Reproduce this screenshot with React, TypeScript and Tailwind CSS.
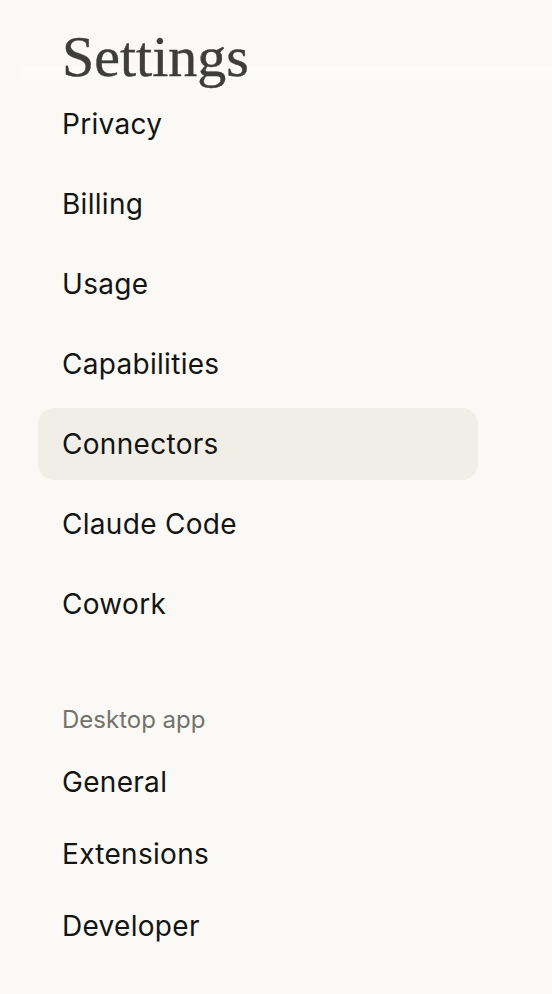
import React from "react";

const main = ["Privacy", "Billing", "Usage", "Capabilities", "Connectors", "Claude Code", "Cowork"];
const desktop = ["General", "Extensions", "Developer"];

export default function App() {
  return (
    <div className="min-h-[994px] w-full bg-[#faf9f5] text-[#141413]" style={{ fontFamily: "Inter, 'Noto Sans', sans-serif" }}>
      <div className="relative">
        <div className="pointer-events-none absolute left-[22px] right-0 top-[66px] h-[46px] bg-gradient-to-b from-[#ffffff]/35 to-[#ffffff]/0" />
        <div className="relative z-10 flex h-[88px] items-start px-[62px] pt-[25px]">
          <h1
            className="text-[58px] font-normal leading-[64px] text-[#3d3d3a]"
            style={{ fontFamily: "'Liberation Serif', 'DejaVu Serif', serif", WebkitTextStroke: "0.4px #3d3d3a" }}
          >
            Settings
          </h1>
        </div>
      </div>
      <nav className="flex flex-col gap-[8px] px-[38px]">
        {main.map((m) => (
          <div
            key={m}
            className={`flex h-[72px] w-[440px] items-center rounded-[16px] px-[24px] text-[28px] tracking-[0.3px] ${
              m === "Connectors" ? "bg-[#f0eee6]" : ""
            }`}
          >
            {m}
          </div>
        ))}
      </nav>
      <div className="mt-[64px] px-[62px] text-[24px] leading-[32px] text-[#73726c]">Desktop app</div>
      <nav className="mt-[10px] flex flex-col px-[38px]">
        {desktop.map((m) => (
          <div key={m} className="flex h-[72px] w-[440px] items-center rounded-[16px] px-[24px] text-[28px] tracking-[0.3px]">
            {m}
          </div>
        ))}
      </nav>
    </div>
  );
}
